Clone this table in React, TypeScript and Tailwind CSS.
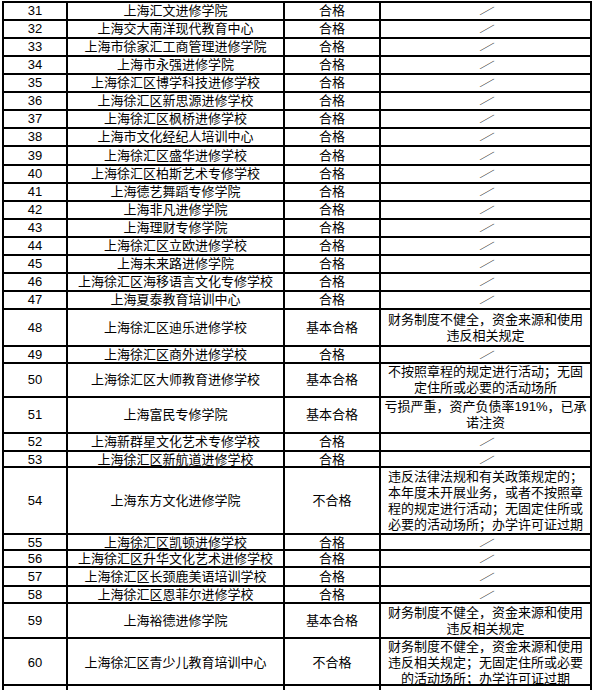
import React from 'react';

type Row = {
  no: number;
  name: string;
  result: string;
  notes: string[];
  h: string;
};

const rows: Row[] = [
  { no: 31, name: '上海汇文进修学院', result: '合格', notes: [], h: 'h-[18px]' },
  { no: 32, name: '上海交大南洋现代教育中心', result: '合格', notes: [], h: 'h-[18px]' },
  { no: 33, name: '上海市徐家汇工商管理进修学院', result: '合格', notes: [], h: 'h-[18px]' },
  { no: 34, name: '上海市永强进修学院', result: '合格', notes: [], h: 'h-[18px]' },
  { no: 35, name: '上海徐汇区博学科技进修学校', result: '合格', notes: [], h: 'h-[18px]' },
  { no: 36, name: '上海徐汇区新思源进修学校', result: '合格', notes: [], h: 'h-[18px]' },
  { no: 37, name: '上海徐汇区枫桥进修学校', result: '合格', notes: [], h: 'h-[18px]' },
  { no: 38, name: '上海市文化经纪人培训中心', result: '合格', notes: [], h: 'h-[18px]' },
  { no: 39, name: '上海徐汇区盛华进修学校', result: '合格', notes: [], h: 'h-[19px]' },
  { no: 40, name: '上海徐汇区柏斯艺术专修学校', result: '合格', notes: [], h: 'h-[18px]' },
  { no: 41, name: '上海德艺舞蹈专修学院', result: '合格', notes: [], h: 'h-[18px]' },
  { no: 42, name: '上海非凡进修学院', result: '合格', notes: [], h: 'h-[18px]' },
  { no: 43, name: '上海理财专修学院', result: '合格', notes: [], h: 'h-[18px]' },
  { no: 44, name: '上海徐汇区立欧进修学校', result: '合格', notes: [], h: 'h-[18px]' },
  { no: 45, name: '上海未来路进修学院', result: '合格', notes: [], h: 'h-[18px]' },
  { no: 46, name: '上海徐汇区海移语言文化专修学校', result: '合格', notes: [], h: 'h-[18px]' },
  { no: 47, name: '上海夏泰教育培训中心', result: '合格', notes: [], h: 'h-[18px]' },
  {
    no: 48,
    name: '上海徐汇区迪乐进修学校',
    result: '基本合格',
    notes: ['财务制度不健全，资金来源和使用', '违反相关规定'],
    h: 'h-[37px]',
  },
  { no: 49, name: '上海徐汇区商外进修学校', result: '合格', notes: [], h: 'h-[17px]' },
  {
    no: 50,
    name: '上海徐汇区大师教育进修学校',
    result: '基本合格',
    notes: ['不按照章程的规定进行活动；无固', '定住所或必要的活动场所'],
    h: 'h-[34px]',
  },
  {
    no: 51,
    name: '上海富民专修学院',
    result: '基本合格',
    notes: ['亏损严重，资产负债率191%，已承', '诺注资'],
    h: 'h-[36px]',
  },
  { no: 52, name: '上海新群星文化艺术专修学校', result: '合格', notes: [], h: 'h-[18px]' },
  { no: 53, name: '上海徐汇区新航道进修学校', result: '合格', notes: [], h: 'h-[16px]' },
  {
    no: 54,
    name: '上海东方文化进修学院',
    result: '不合格',
    notes: [
      '违反法律法规和有关政策规定的；',
      '本年度未开展业务，或者不按照章',
      '程的规定进行活动；无固定住所或',
      '必要的活动场所；办学许可证过期',
    ],
    h: 'h-[67px]',
  },
  { no: 55, name: '上海徐汇区凯顿进修学校', result: '合格', notes: [], h: 'h-[16px]' },
  { no: 56, name: '上海徐汇区升华文化艺术进修学校', result: '合格', notes: [], h: 'h-[17px]' },
  { no: 57, name: '上海徐汇区长颈鹿美语培训学校', result: '合格', notes: [], h: 'h-[19px]' },
  { no: 58, name: '上海徐汇区恩菲尔进修学校', result: '合格', notes: [], h: 'h-[17px]' },
  {
    no: 59,
    name: '上海裕德进修学院',
    result: '基本合格',
    notes: ['财务制度不健全，资金来源和使用', '违反相关规定'],
    h: 'h-[35px]',
  },
  {
    no: 60,
    name: '上海徐汇区青少儿教育培训中心',
    result: '不合格',
    notes: [
      '财务制度不健全，资金来源和使用',
      '违反相关规定；无固定住所或必要',
      '的活动场所；办学许可证过期',
    ],
    h: 'h-[47px]',
  },
];

const cell = 'flex items-center justify-center border-r-2 border-black';

export default function App() {
  return (
    <div
      className="w-[595px] h-[690px] overflow-hidden bg-white text-black"
      style={{ fontFamily: '"Liberation Sans", "Noto Sans CJK SC", sans-serif' }}
    >
      <div className="ml-[2px] mt-[1px] w-[590px] border-x-2 border-t-2 border-black text-[13px] leading-[16px]">
        {rows.map((r) => (
          <div key={r.no} className={`grid grid-cols-[64px_217px_96px_209px] border-b-2 border-black ${r.h}`}>
            <div className={cell}>{r.no}</div>
            <div className={`${cell} whitespace-nowrap`}>{r.name}</div>
            <div className={`${cell} whitespace-nowrap`}>{r.result}</div>
            <div className="flex flex-col items-center justify-center whitespace-nowrap">
              {r.notes.length === 0 ? (
                <span className="ml-[4px] inline-block text-[12px] scale-x-[1.3] scale-y-[0.75]">／</span>
              ) : (
                r.notes.map((line, i) => <div key={i}>{line}</div>)
              )}
            </div>
          </div>
        ))}
        {/* next row, cut off by the bottom of the screenshot */}
        <div className="grid grid-cols-[64px_217px_96px_209px] h-[18px]">
          <div className={cell} />
          <div className={cell} />
          <div className={cell} />
          <div />
        </div>
      </div>
    </div>
  );
}
